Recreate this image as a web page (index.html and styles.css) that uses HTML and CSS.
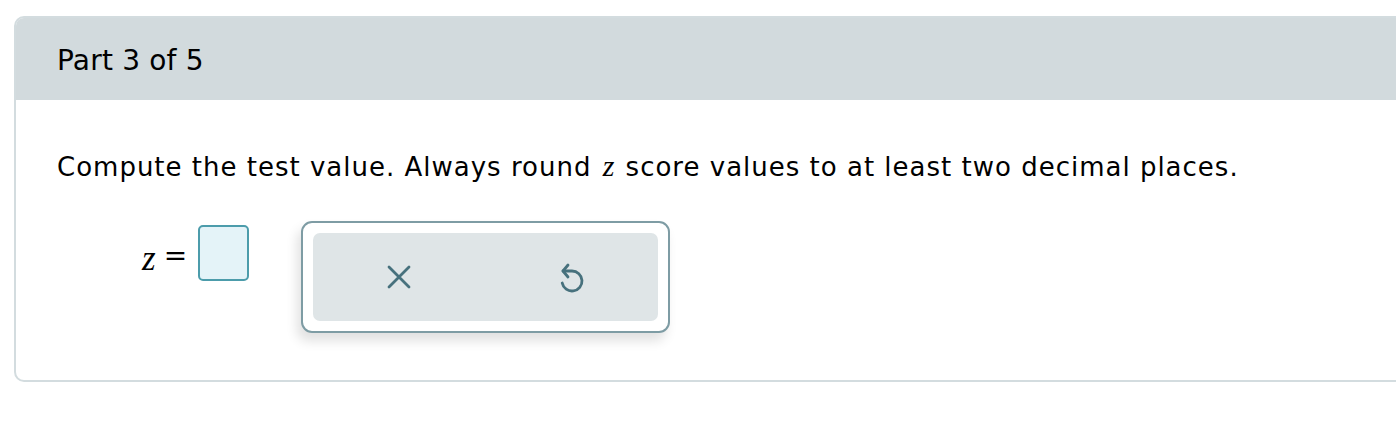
FILE: index.html
```html
<!DOCTYPE html>
<html lang="en">
<head>
    <meta charset="UTF-8">
    <meta name="viewport" content="width=device-width, initial-scale=1.0">
    <title>Part 3 of 5</title>
    <link rel="stylesheet" href="styles.css">
</head>
<body>

<div class="card">
    <header class="card-head">
        <h2>Part 3 of 5</h2>
    </header>

    <div class="card-body">
        <p class="prompt">Compute the test value. Always round <i class="var">z</i> score values to at least two decimal places.</p>

        <div class="answer-row">
            <div class="equation">
                <span class="var">z</span><span class="eq">=</span>
                <span class="answer-box"></span>
            </div>

            <div class="keypad">
                <div class="keypad-inner">
                    <button class="key" title="Clear">
                        <svg width="24" height="24" viewBox="0 0 24 24">
                            <path d="M2 2 L22 22 M22 2 L2 22" />
                        </svg>
                    </button>
                    <button class="key" title="Undo">
                        <svg width="28" height="34" viewBox="0 0 28 34">
                            <path d="M5 11 L14 11 A10 10 0 1 1 4.2 23" />
                            <path d="M10 5 L5 11 L10 17" />
                        </svg>
                    </button>
                </div>
            </div>
        </div>
    </div>
</div>

</body>
</html>
```

FILE: styles.css
```css
html, body {
    overflow: hidden;
}

body {
    margin: 0;
    padding: 16px 0 0 14px;
    font-family: "DejaVu Sans", Verdana, sans-serif;
    color: #000;
    background-color: #fff;
}

.card {
    width: 1420px;
    border: 2px solid #d3dcdf;
    border-radius: 10px;
    overflow: hidden;
}

.card-head {
    background-color: #d2dadd;
    height: 82px;
    padding: 4px 0 0 41px;
    box-sizing: border-box;
    display: flex;
    align-items: center;
}

.card-head h2 {
    margin: 0;
    font-size: 28px;
    letter-spacing: 0.2px;
    font-weight: normal;
    line-height: 1;
}

.card-body {
    padding: 48px 41px 47px;
}

.prompt {
    margin: 0;
    font-size: 26px;
    letter-spacing: 1px;
    line-height: 1.2;
}

.prompt .var {
    letter-spacing: 0;
    margin: 0 2px;
}

.var {
    font-family: "Liberation Serif", "DejaVu Serif", serif;
    font-style: italic;
    font-size: 30px;
}

.answer-row {
    display: flex;
    align-items: flex-start;
    margin-top: 37px;
    padding-left: 85px;
}

.equation {
    display: flex;
    align-items: flex-start;
    margin-top: 4px;
}

.equation .var {
    font-size: 35px;
    line-height: 1;
    margin-top: 16px;
}

.eq {
    font-family: "DejaVu Serif", serif;
    font-size: 28px;
    line-height: 1;
    margin: 17px 0 0 8px;
}

.answer-box {
    width: 47px;
    height: 52px;
    border: 2px solid #4c9cab;
    border-radius: 5px;
    background-color: #e4f3f8;
    margin-left: 11px;
}

.keypad {
    margin-left: 52px;
    width: 345px;
    height: 88px;
    padding: 10px;
    border: 2px solid #7e9ca4;
    border-radius: 11px;
    background-color: #fff;
    box-shadow: -4px 8px 12px rgba(0, 0, 0, 0.12);
}

.keypad-inner {
    display: flex;
    height: 100%;
    background-color: #dfe5e7;
    border-radius: 7px;
}

.key {
    flex: 1;
    border: none;
    background: none;
    padding: 0;
    display: flex;
    align-items: center;
    justify-content: center;
    cursor: pointer;
}

.key svg {
    fill: none;
    stroke: #47717d;
    stroke-width: 2.8;
    stroke-linecap: round;
    stroke-linejoin: round;
}
```
